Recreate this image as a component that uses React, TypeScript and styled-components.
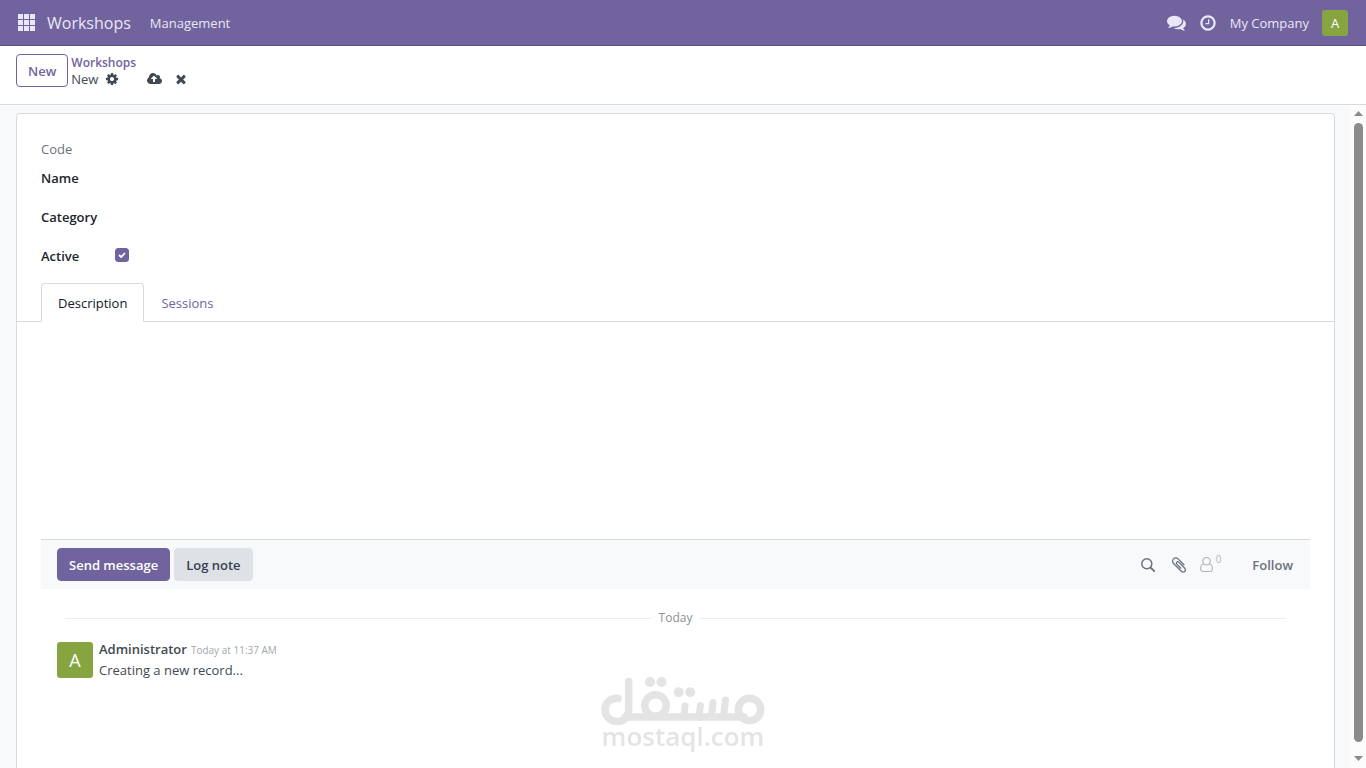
import React, { useState } from "react";
import styled, { createGlobalStyle } from "styled-components";

const c = {
  brand: "#71639e",
  brandDark: "#5a4f7f",
  navText: "#ebe6f5",
  green: "#86a541",
  line: "#d8dadd",
  pale: "#f8f9fa",
  text: "#374151",
  muted: "#6b7280",
};

const Global = createGlobalStyle`
  * { box-sizing: border-box; }
  body { margin: 0; background: ${c.pale}; color: #414a52; font: 13px/20px "Open Sans", "Noto Sans", sans-serif; }
  button, input { font: inherit; color: inherit; margin: 0; }
  button { cursor: pointer; }
`;

const Page = styled.div`
  display: flex;
  flex-direction: column;
  min-height: 100vh;
`;

const Navbar = styled.nav`
  display: flex;
  align-items: center;
  height: 46px;
  padding: 0 18px;
  background: ${c.brand};
  border-bottom: 1px solid ${c.brandDark};
  color: ${c.navText};
`;

const IconButton = styled.button`
  display: flex;
  align-items: center;
  justify-content: center;
  padding: 0;
  border: 0;
  background: none;
`;

const NavLink = styled.a<{ $brand?: boolean }>`
  color: inherit;
  text-decoration: none;
  margin-left: ${(p) => (p.$brand ? 11 : 19)}px;
  font-size: ${(p) => (p.$brand ? 16 : 13)}px;
`;

const NavRight = styled.div`
  display: flex;
  align-items: center;
  gap: 13px;
  margin-left: auto;
`;

const Avatar = styled.span<{ $size: number; $font: number }>`
  display: flex;
  align-items: center;
  justify-content: center;
  flex: none;
  width: ${(p) => p.$size}px;
  height: ${(p) => p.$size}px;
  border-radius: 3px;
  background: ${c.green};
  color: #fff;
  font-size: ${(p) => p.$font}px;
`;

const ControlPanel = styled.header`
  display: flex;
  align-items: flex-start;
  gap: 3px;
  height: 59px;
  padding: 8px 16px;
  background: #fff;
  border-bottom: 1px solid ${c.line};
`;

const Button = styled.button<{ $kind: "outline" | "primary" | "secondary" | "link" }>`
  height: 33px;
  padding: 0 11px;
  border-radius: 4px;
  font-weight: 600;
  white-space: nowrap;
  border: 1px solid
    ${(p) => ({ outline: c.brand, primary: c.brand, secondary: "#dee2e6", link: "transparent" })[p.$kind]};
  background: ${(p) => ({ outline: "#fff", primary: c.brand, secondary: "#dee2e6", link: "transparent" })[p.$kind]};
  color: ${(p) => ({ outline: c.brand, primary: "#fff", secondary: c.text, link: c.muted })[p.$kind]};
`;

const Breadcrumb = styled.div`
  display: flex;
  flex-direction: column;
`;

const CrumbLink = styled.a`
  color: ${c.brand};
  font-size: 12px;
  font-weight: 600;
  line-height: 17px;
  text-decoration: none;
`;

const CrumbCurrent = styled.div`
  display: flex;
  align-items: center;
  gap: 7px;
  line-height: 16px;
`;

const CrumbActions = styled.div`
  display: flex;
  gap: 12px;
  margin-left: 21px;
`;

const Body = styled.div`
  display: flex;
  flex: 1;
`;

const Sheet = styled.main`
  display: flex;
  flex-direction: column;
  flex: 1;
  margin: 8px 15px 0 16px;
  padding: 25px 0 0;
  background: #fff;
  border: 1px solid ${c.line};
  border-bottom: 0;
  border-radius: 4px 4px 0 0;
`;

const Fields = styled.form`
  padding: 0 24px;
`;

const Field = styled.div<{ $compact?: boolean }>`
  display: grid;
  grid-template-columns: 74px 1fr;
  align-items: center;
  height: ${(p) => (p.$compact ? 19 : 39)}px;
`;

const Label = styled.label`
  color: #212529;
  font-weight: 600;
`;

const ReadonlyLabel = styled.span`
  color: ${c.muted};
`;

const TextInput = styled.input`
  width: 100%;
  height: 20px;
  padding: 0;
  border: 0;
  outline: 0;
  background: transparent;
`;

const CheckWrap = styled.span`
  display: grid;
  width: 14px;
  height: 14px;
  margin-bottom: 2px;
  > * {
    grid-area: 1 / 1;
  }
  svg {
    place-self: center;
    pointer-events: none;
  }
`;

const CheckBox = styled.input`
  appearance: none;
  width: 14px;
  height: 14px;
  border: 1px solid ${c.brand};
  border-radius: 3px;
  background: #fff;
  &:checked {
    background: ${c.brand};
  }
`;

const TabList = styled.div`
  display: flex;
  margin-top: 8px;
  padding: 0 24px;
  border-bottom: 1px solid ${c.line};
`;

const Tab = styled.button<{ $active: boolean }>`
  height: 39px;
  margin-bottom: -1px;
  padding: 0 16px;
  border: 1px solid ${(p) => (p.$active ? c.line : "transparent")};
  border-bottom-color: ${(p) => (p.$active ? "#fff" : "transparent")};
  border-radius: 4px 4px 0 0;
  background: ${(p) => (p.$active ? "#fff" : "transparent")};
  color: ${(p) => (p.$active ? "#111827" : c.brand)};
`;

const TabPanel = styled.div`
  min-height: 217px;
`;

const Chatter = styled.section`
  margin: 0 24px;
`;

const Topbar = styled.div`
  display: flex;
  align-items: center;
  gap: 4px;
  height: 50px;
  padding: 0 5px 0 16px;
  border-top: 1px solid ${c.line};
  background: ${c.pale};
`;

const Tools = styled.div`
  display: flex;
  align-items: center;
  gap: 11px;
  margin-left: auto;
  color: ${c.muted};
  ${IconButton} {
    width: 20px;
  }
`;

const Followers = styled.button`
  display: flex;
  align-items: center;
  gap: 3px;
  margin-right: 8px;
  padding: 0;
  border: 0;
  background: none;
  color: #b1b5bb;
`;

const Count = styled.span`
  font-size: 10px;
  line-height: 10px;
  margin-bottom: 12px;
`;

const DateRow = styled.div`
  display: flex;
  align-items: center;
  gap: 8px;
  margin: 19px 24px 14px;
  color: #8b9197;
  font-size: 12px;
  &::before,
  &::after {
    content: "";
    flex: 1;
    border-top: 1px solid #ebedef;
  }
`;

const Message = styled.article`
  display: flex;
  gap: 6px;
  padding: 0 16px;
`;

const Author = styled.strong`
  font-weight: 600;
`;

const Stamp = styled.time`
  margin-left: 4px;
  color: #a3a8ad;
  font-size: 10px;
`;

const MessageHead = styled.div`
  line-height: 14px;
`;

const MessageText = styled.p`
  margin: 3px 0 0;
`;

const ScrollTrack = styled.div`
  display: flex;
  flex-direction: column;
  align-items: center;
  gap: 7px;
  width: 16px;
  padding: 6px 0 7px;
  background: #fcfcfc;
`;

const ScrollThumb = styled.div`
  flex: 1;
  width: 9px;
  margin-bottom: 7px;
  border-radius: 5px;
  background: #8b8b8b;
`;

const Watermark = styled.div`
  position: fixed;
  bottom: 23px;
  left: 50%;
  display: flex;
  flex-direction: column;
  align-items: center;
  transform: translateX(-50%);
  color: #e4e4e4;
  font-size: 26px;
  font-weight: 600;
  line-height: 18px;
  pointer-events: none;
`;

const paths = {
  comments:
    "M1408 768q0 139-94 257t-256.5 186.5-353.5 68.5q-86 0-176-16-124 88-278 128-36 9-86 16h-3q-11 0-20.5-8t-11.5-21q-1-3-1-6.5t.5-6.5 2-6l2.5-5 3.5-5.5 4-5 4.5-5 4-4.5q5-6 23-25t26-29.5 22.5-29 25-38.5 20.5-44q-124-72-195-177t-71-224q0-139 94-257t256.5-186.5 353.5-68.5 353.5 68.5 256.5 186.5 94 257zm384 256q0 120-71 224.5t-195 176.5q10 24 20.5 44t25 38.5 22.5 29 26 29.5 23 25q1 1 4 4.5t4.5 5 4 5 3.5 5.5l2.5 5 2 6 .5 6.5-1 6.5q-3 14-13 22t-22 7q-50-7-86-16-154-40-278-128-90 16-176 16-271 0-472-132 58 4 88 4 161 0 309-45t264-129q125-92 192-212t67-254q0-77-23-152 129 71 204 178t75 230z",
  clock:
    "M1024 544v448q0 14-9 23t-23 9h-320q-14 0-23-9t-9-23v-64q0-14 9-23t23-9h224v-352q0-14 9-23t23-9h64q14 0 23 9t9 23zm416 352q0-148-73-273t-198-198-273-73-273 73-198 198-73 273 73 273 198 198 273 73 273-73 198-198 73-273zm224 0q0 209-103 385.5t-279.5 279.5-385.5 103-385.5-103-279.5-279.5-103-385.5 103-385.5 279.5-279.5 385.5-103 385.5 103 279.5 279.5 103 385.5z",
  cog: "M1152 896q0-106-75-181t-181-75-181 75-75 181 75 181 181 75 181-75 75-181zm512-109v222q0 12-8 23t-20 13l-185 28q-19 54-39 91 35 50 107 138 10 12 10 25t-9 23q-27 37-99 108t-94 71q-12 0-26-9l-138-108q-44 23-91 38-16 136-29 186-7 28-36 28h-222q-14 0-24.5-8.5t-11.5-21.5l-28-184q-49-16-90-37l-141 107q-10 9-25 9-14 0-25-11-126-114-165-168-7-10-7-23 0-12 8-23 15-21 51-66.5t54-70.5q-27-50-41-99l-183-27q-13-2-21-12.5t-8-23.5v-222q0-12 8-23t19-13l186-28q14-46 39-92-40-57-107-138-10-12-10-24 0-10 9-23 26-36 98.5-107.5t94.5-71.5q13 0 26 10l138 107q44-23 91-38 16-136 29-186 7-28 36-28h222q14 0 24.5 8.5t11.5 21.5l28 184q49 16 90 37l142-107q9-9 24-9 13 0 25 10 129 119 165 170 7 8 7 22 0 12-8 23-15 21-51 66.5t-54 70.5q26 50 41 98l183 28q13 2 21 12.5t8 23.5z",
  upload:
    "M1216 864q0-14-9-23l-352-352q-9-9-23-9t-23 9l-351 351q-10 12-10 24 0 14 9 23t23 9h224v352q0 13 9.5 22.5t22.5 9.5h192q13 0 22.5-9.5t9.5-22.5v-352h224q13 0 22.5-9.5t9.5-22.5zm640 288q0 159-112.5 271.5t-271.5 112.5h-1088q-185 0-316.5-131.5t-131.5-316.5q0-130 70-240t188-165q-2-30-2-43 0-212 150-362t362-150q156 0 285.5 87t188.5 231q71-62 166-62 106 0 181 75t75 181q0 76-41 138 130 31 213.5 135.5t83.5 238.5z",
  times:
    "M1490 1322q0 40-28 68l-136 136q-28 28-68 28t-68-28l-294-294-294 294q-28 28-68 28t-68-28l-136-136q-28-28-28-68t28-68l294-294-294-294q-28-28-28-68t28-68l136-136q28-28 68-28t68 28l294 294 294-294q28-28 68-28t68 28l136 136q28 28 28 68t-28 68l-294 294 294 294q28 28 28 68z",
  clip: "M1596 1385q0 117-79 196t-196 79q-135 0-235-100l-777-776q-113-115-113-271 0-159 110-270t269-111q158 0 273 113l605 606q10 10 10 22 0 16-30.5 46.5t-46.5 30.5q-13 0-23-10l-606-607q-79-77-181-77-106 0-179 75t-73 181q0 105 76 181l776 777q63 63 145 63 64 0 106-42t42-106q0-82-63-145l-581-581q-26-24-60-24-29 0-48 19t-19 48q0 32 25 59l410 410q10 10 10 22 0 16-31 47t-47 31q-12 0-22-10l-410-410q-63-61-63-149 0-82 57-139t139-57q88 0 149 63l581 581q100 98 100 235z",
  user: "M1201 784q47 14 89.5 38t89 73 79.5 115.5 55 172 22 236.5q0 154-100 263.5t-241 109.5h-854q-141 0-241-109.5t-100-263.5q0-131 22-236.5t55-172 79.5-115.5 89-73 89.5-38q-79-125-79-272 0-104 40.5-198.5t109.5-163.5 163.5-109.5 198.5-40.5 198.5 40.5 163.5 109.5 109.5 163.5 40.5 198.5q0 147-79 272zm-433-656q-159 0-271.5 112.5t-112.5 271.5 112.5 271.5 271.5 112.5 271.5-112.5 112.5-271.5-112.5-271.5-271.5-112.5zm427 1536q88 0 150.5-71.5t62.5-173.5q0-239-78.5-377t-225.5-145q-145 127-336 127t-336-127q-147 7-225.5 145t-78.5 377q0 102 62.5 173.5t150.5 71.5h854z",
};

function Icon({ name, w, h = w, box = "0 0 1792 1792" }: { name: keyof typeof paths; w: number; h?: number; box?: string }) {
  return (
    <svg width={w} height={h} viewBox={box} fill="currentColor" aria-hidden="true">
      <path d={paths[name]} />
    </svg>
  );
}

function AppsIcon() {
  return (
    <svg width="18" height="18" viewBox="0 0 18 18" fill="currentColor" aria-hidden="true">
      {[0, 1, 2].map((r) => [0, 1, 2].map((k) => <rect key={`${r}${k}`} x={k * 6} y={r * 6} width="5" height="5" />))}
    </svg>
  );
}

function Arrow({ up }: { up?: boolean }) {
  return (
    <svg width="9" height="5" viewBox="0 0 9 5" fill="#8b8b8b" aria-hidden="true">
      <path d={up ? "M0 5 4.5 0 9 5z" : "M0 0 4.5 5 9 0z"} />
    </svg>
  );
}

function Logo() {
  return (
    <svg width="164" height="50" viewBox="0 0 164 50" fill="none" stroke="currentColor" aria-hidden="true">
      <g strokeWidth="7.5" strokeLinecap="round" strokeLinejoin="round">
        <path d="M17 21.500C9.500 20.500 4 26 4 32.500C4 39.500 9.500 44.500 16 44.500C23 44.500 27.700 39.500 27.700 32V4.500" />
        <path d="M24 40H143" />
        <circle cx="54.500" cy="28.500" r="10.700" />
        <circle cx="148.500" cy="32.500" r="11.200" />
      </g>
      <path
        d="M83 39 84 29M98 39 99.500 28.500M110.500 39 112 25.500M122.500 39 124.500 23"
        strokeWidth="7"
        strokeLinecap="round"
      />
      <g fill="currentColor" stroke="none">
        <circle cx="49" cy="5" r="5" />
        <circle cx="60.500" cy="5" r="5" />
        <circle cx="77.700" cy="15.300" r="5" />
        <circle cx="89.200" cy="15.300" r="5" />
      </g>
    </svg>
  );
}

export default function App() {
  const [tab, setTab] = useState("Description");
  const [active, setActive] = useState(true);
  return (
    <Page>
      <Global />
      <Navbar>
        <IconButton aria-label="Home menu">
          <AppsIcon />
        </IconButton>
        <NavLink $brand href="#workshops">Workshops</NavLink>
        <NavLink href="#management">Management</NavLink>
        <NavRight>
          <IconButton aria-label="Conversations">
            <Icon name="comments" w={19} />
          </IconButton>
          <IconButton aria-label="Activities">
            <Icon name="clock" w={18} />
          </IconButton>
          <span>My Company</span>
          <Avatar $size={26} $font={13}>A</Avatar>
        </NavRight>
      </Navbar>
      <ControlPanel>
        <Button $kind="outline">New</Button>
        <Breadcrumb>
          <CrumbLink href="#list">Workshops</CrumbLink>
          <CrumbCurrent>
            New
            <IconButton aria-label="Actions">
              <Icon name="cog" w={14} />
            </IconButton>
            <CrumbActions>
              <IconButton aria-label="Save">
                <Icon name="upload" w={15} h={14} box="-64 0 1920 1792" />
              </IconButton>
              <IconButton aria-label="Discard">
                <Icon name="times" w={14} />
              </IconButton>
            </CrumbActions>
          </CrumbCurrent>
        </Breadcrumb>
      </ControlPanel>
      <Body>
        <Sheet>
          <Fields>
            <Field $compact>
              <ReadonlyLabel>Code</ReadonlyLabel>
            </Field>
            <Field>
              <Label htmlFor="name">Name</Label>
              <TextInput id="name" />
            </Field>
            <Field>
              <Label htmlFor="category">Category</Label>
              <TextInput id="category" />
            </Field>
            <Field>
              <Label htmlFor="active">Active</Label>
              <CheckWrap>
                <CheckBox id="active" type="checkbox" checked={active} onChange={(e) => setActive(e.target.checked)} />
                <svg width="8" height="8" viewBox="0 0 8 8" fill="none" stroke="#fff" strokeWidth="1.800" aria-hidden="true">
                  <path d="M1 4 3.200 6 7 2" />
                </svg>
              </CheckWrap>
            </Field>
          </Fields>
          <TabList role="tablist">
            {["Description", "Sessions"].map((t) => (
              <Tab key={t} role="tab" aria-selected={tab === t} $active={tab === t} onClick={() => setTab(t)}>
                {t}
              </Tab>
            ))}
          </TabList>
          <TabPanel role="tabpanel" />
          <Chatter>
            <Topbar>
              <Button $kind="primary">Send message</Button>
              <Button $kind="secondary">Log note</Button>
              <Tools>
                <IconButton aria-label="Search messages">
                  <svg width="16" height="16" viewBox="0 0 16 16" fill="none" stroke="currentColor" strokeWidth="1.500" aria-hidden="true">
                    <circle cx="6.800" cy="6.800" r="5" />
                    <path d="M10.500 10.500 14.700 14.700" strokeWidth="1.800" />
                  </svg>
                </IconButton>
                <IconButton aria-label="Attach files">
                  <Icon name="clip" w={18} />
                </IconButton>
                <Followers aria-label="Followers">
                  <Icon name="user" w={13} h={15} box="0 0 1536 1792" />
                  <Count>0</Count>
                </Followers>
                <Button $kind="link">Follow</Button>
              </Tools>
            </Topbar>
            <DateRow>Today</DateRow>
            <Message>
              <Avatar $size={36} $font={18}>A</Avatar>
              <div>
                <MessageHead>
                  <Author>Administrator</Author>
                  <Stamp>Today at 11:37 AM</Stamp>
                </MessageHead>
                <MessageText>Creating a new record...</MessageText>
              </div>
            </Message>
          </Chatter>
        </Sheet>
        <ScrollTrack aria-hidden="true">
          <Arrow up />
          <ScrollThumb />
          <Arrow />
        </ScrollTrack>
      </Body>
      <Watermark>
        <Logo />
        mostaql.com
      </Watermark>
    </Page>
  );
}
